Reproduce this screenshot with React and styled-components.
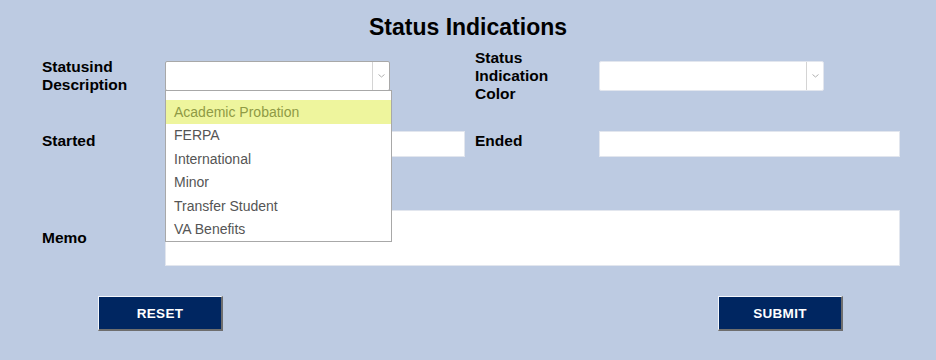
import styled, { createGlobalStyle } from "styled-components";

const GlobalStyle = createGlobalStyle`
  html, body {
    margin: 0;
    padding: 0;
    background: #bdcbe2;
  }
  * { box-sizing: border-box; }
`;

const Page = styled.div`
  width: 936px;
  height: 360px;
  background: #bdcbe2;
  font-family: "Liberation Sans", Arial, sans-serif;
  color: #000;
  overflow: hidden;
`;

const Title = styled.h1`
  margin: 0;
  padding-top: 14px;
  text-align: center;
  font-size: 23px;
  line-height: 27px;
  font-weight: 700;
`;

const Form = styled.div`
  padding-left: 42px;
`;

const Row = styled.div`
  display: flex;
  align-items: center;
  margin-top: ${(p) => p.$top}px;
`;

const Label = styled.div`
  width: ${(p) => p.$width || 123}px;
  flex-shrink: 0;
  font-size: 15.5px;
  line-height: 18px;
  font-weight: 700;
  padding-bottom: ${(p) => p.$lift || 0}px;
`;

const Field = styled.div`
  position: relative;
  width: ${(p) => p.$width || 300}px;
  margin-right: ${(p) => p.$gap || 0}px;
  flex-shrink: 0;
`;

const SelectBox = styled.div`
  height: 30px;
  background: #fff;
  border: 1px solid ${(p) => (p.$open ? "#a8a8a8" : "#e2e6ee")};
  border-radius: 2px;
  display: flex;
  justify-content: flex-end;
`;

const Arrow = styled.div`
  width: 17px;
  border-left: 1px solid #d4d4d4;
  display: flex;
  align-items: center;
  justify-content: center;
`;

const Menu = styled.ul`
  position: absolute;
  top: 29px;
  left: 0;
  width: 227px;
  margin: 0;
  padding: 9px 0 0;
  list-style: none;
  background: #fff;
  border: 1px solid #a8a8a8;
  z-index: 2;
`;

const Option = styled.li`
  height: 23.5px;
  display: flex;
  align-items: center;
  padding-left: 8px;
  font-size: 14px;
  color: ${(p) => (p.$active ? "#8f9a45" : "#555")};
  background: ${(p) => (p.$active ? "#eef59d" : "#fff")};
`;

const Input = styled.input`
  display: block;
  width: 100%;
  height: ${(p) => p.$height || 26}px;
  border: 1px solid #e2e6ee;
  background: #fff;
  outline: none;
  padding: 0 6px;
  font-family: inherit;
`;

const ButtonBar = styled.div`
  display: flex;
  justify-content: space-between;
  padding: 0 93px 0 98px;
  margin-top: 30px;
`;

const Button = styled.button`
  width: 125px;
  height: 35px;
  background: #002661;
  color: #fff;
  font-family: "Liberation Sans", Arial, sans-serif;
  font-weight: 700;
  font-size: 13.5px;
  letter-spacing: 0.3px;
  border-style: solid;
  border-width: 1px 2px 2px 1px;
  border-color: #f4f6fa #6e6e6e #6e6e6e #f4f6fa;
  padding: 0;
`;

const Chevron = () => (
  <svg width="7" height="4" viewBox="0 0 7 4">
    <path d="M0.5 0.5 L3.5 3 L6.5 0.5" fill="none" stroke="#b0b0b0" strokeWidth="1" />
  </svg>
);

const options = [
  "Academic Probation",
  "FERPA",
  "International",
  "Minor",
  "Transfer Student",
  "VA Benefits",
];

function App() {
  return (
    <Page>
      <GlobalStyle />
      <Title>Status Indications</Title>
      <Form>
        <Row $top={8}>
          <Label>Statusind<br />Description</Label>
          <Field $width={225} $gap={85}>
            <SelectBox $open>
              <Arrow><Chevron /></Arrow>
            </SelectBox>
            <Menu>
              {options.map((o, i) => (
                <Option key={o} $active={i === 0}>{o}</Option>
              ))}
            </Menu>
          </Field>
          <Label $width={124}>Status<br />Indication<br />Color</Label>
          <Field $width={225}>
            <SelectBox>
              <Arrow><Chevron /></Arrow>
            </SelectBox>
          </Field>
        </Row>
        <Row $top={28}>
          <Label $lift={7}>Started</Label>
          <Field $gap={10}>
            <Input />
          </Field>
          <Label $width={124} $lift={7}>Ended</Label>
          <Field $width={301}>
            <Input />
          </Field>
        </Row>
        <Row $top={53}>
          <Label>Memo</Label>
          <Field $width={735}>
            <Input $height={56} />
          </Field>
        </Row>
      </Form>
      <ButtonBar>
        <Button>RESET</Button>
        <Button>SUBMIT</Button>
      </ButtonBar>
    </Page>
  );
}

export default App;
